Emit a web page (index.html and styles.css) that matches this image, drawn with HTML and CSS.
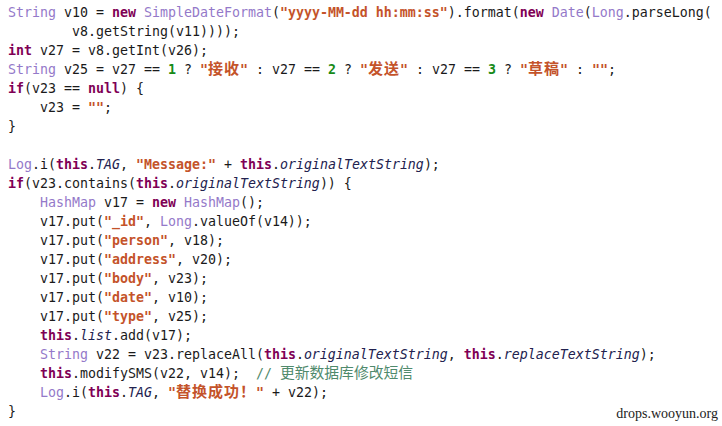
FILE: index.html
```html
<!DOCTYPE html>
<html lang="zh">
<head>
<meta charset="utf-8">
<title>code</title>
<link rel="stylesheet" href="styles.css">
</head>
<body>
<div class="page">
<pre class="code"><span class="t">String</span> v10 = <span class="k">new</span> <span class="t">SimpleDateFormat</span>(<span class="s">"yyyy-MM-dd hh:mm:ss"</span>).format(<span class="k">new</span> <span class="t">Date</span>(<span class="t">Long</span>.parseLong(
        v8.getString(v11))));
<span class="k">int</span> v27 = v8.getInt(v26);
<span class="t">String</span> v25 = v27 == <span class="n">1</span> ? <span class="s">"<span class="z">接收</span>"</span> : v27 == <span class="n">2</span> ? <span class="s">"<span class="z">发送</span>"</span> : v27 == <span class="n">3</span> ? <span class="s">"<span class="z">草稿</span>"</span> : <span class="s">""</span>;
<span class="k">if</span>(v23 == <span class="k">null</span>) {
    v23 = <span class="s">""</span>;
}

<span class="t">Log</span>.i(<span class="k">this</span>.<span class="f">TAG</span>, <span class="s">"Message:"</span> + <span class="k">this</span>.<span class="f">originalTextString</span>);
<span class="k">if</span>(v23.contains(<span class="k">this</span>.<span class="f">originalTextString</span>)) {
    <span class="t">HashMap</span> v17 = <span class="k">new</span> <span class="t">HashMap</span>();
    v17.put(<span class="s">"_id"</span>, <span class="t">Long</span>.valueOf(v14));
    v17.put(<span class="s">"person"</span>, v18);
    v17.put(<span class="s">"address"</span>, v20);
    v17.put(<span class="s">"body"</span>, v23);
    v17.put(<span class="s">"date"</span>, v10);
    v17.put(<span class="s">"type"</span>, v25);
    <span class="k">this</span>.<span class="f">list</span>.add(v17);
    <span class="t">String</span> v22 = v23.replaceAll(<span class="k">this</span>.<span class="f">originalTextString</span>, <span class="k">this</span>.<span class="f">replaceTextString</span>);
    <span class="k">this</span>.modifySMS(v22, v14);  <span class="c">// <span class="zc">更新数据库修改短信</span></span>
    <span class="t">Log</span>.i(<span class="k">this</span>.<span class="f">TAG</span>, <span class="s">"<span class="z">替换成功！</span>"</span> + v22);
}</pre>
<div class="mark">drops.wooyun.org</div>
</div>
</body>
</html>
```

FILE: styles.css
```css
html, body {
  margin: 0;
  padding: 0;
  background: #ffffff;
}

.page {
  position: relative;
  width: 722px;
  height: 426px;
  overflow: hidden;
}

.code {
  margin: 0;
  padding: 3px 0 0 8px;
  font-family: "DejaVu Sans Mono", "Liberation Mono", "Noto Sans CJK SC", monospace;
  font-size: 13.29px;
  line-height: 19px;
  color: #1a1a1a;
  white-space: pre;
}

.k {
  color: #7f0055;
  font-weight: bold;
}

.t {
  color: #9479c9;
}

.s {
  color: #c4532a;
  font-weight: bold;
}

.n {
  color: #178a17;
  font-weight: bold;
}

.f {
  color: #22224f;
  font-style: italic;
}

.c {
  color: #4f8a6c;
}

.z {
  font-family: "Noto Sans CJK SC", sans-serif;
  font-size: 15px;
  line-height: 1px;
  letter-spacing: 1px;
  font-weight: bold;
}

.zc {
  font-family: "Noto Sans CJK SC", sans-serif;
  font-size: 14.8px;
  line-height: 1px;
  font-weight: normal;
}

.mark {
  position: absolute;
  right: 4px;
  bottom: 4px;
  font-family: "Liberation Serif", serif;
  font-size: 14px;
  line-height: 16px;
  color: #222222;
}
```
